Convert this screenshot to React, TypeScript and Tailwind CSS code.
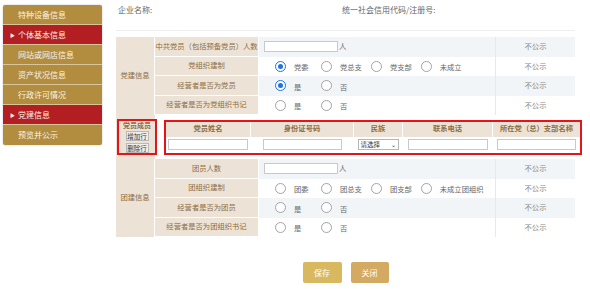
import clsx from "clsx";
import type { ReactNode } from "react";

const sideItems = [
  { label: "特种设备信息" },
  { label: "个体基本信息", active: true },
  { label: "网站或网店信息" },
  { label: "资产状况信息" },
  { label: "行政许可情况" },
  { label: "党建信息", active: true },
  { label: "预览并公示" },
];

function Radio({ label, checked }: { label: string; checked?: boolean }) {
  return (
    <span className="flex items-center">
      <span
        className={clsx(
          "flex h-[11px] w-[11px] items-center justify-center rounded-full bg-white",
          checked ? "border-[1.5px] border-[#1a73e8]" : "border border-[#a3a3a3]"
        )}
      >
        {checked && <span className="h-[5px] w-[5px] rounded-full bg-[#1a73e8]" />}
      </span>
      <span className="ml-[8px] mt-[3px] min-w-[27px] pr-[9px] text-[#666]">{label}</span>
    </span>
  );
}

function RadioGroup({ options, checked }: { options: string[]; checked?: number }) {
  return (
    <div className="flex items-center pl-[16px]">
      {options.map((o, i) => (
        <Radio key={o} label={o} checked={checked === i} />
      ))}
    </div>
  );
}

function CountInput() {
  return (
    <div className="flex items-center pl-[5px]">
      <input className="h-[11px] w-[74px] border border-[#c9c9c9] bg-white" />
      <span className="ml-px text-[#666]">人</span>
    </div>
  );
}

type Row = { label: string; value: ReactNode };

function InfoSection({ title, rows }: { title: string; rows: Row[] }) {
  return (
    <div className="grid grid-cols-[39px_104px_237px_79px] grid-rows-[repeat(4,19.5px)]">
      <div className="row-span-4 flex items-center justify-center border-r border-white bg-[#ece3d6] text-[#8d6d45]">
        {title}
      </div>
      {rows.map((r, i) => (
        <div key={r.label} className="contents">
          <div className="flex items-center justify-center border-r border-b border-white bg-[#ece3d6] text-[#8d6d45]">
            {r.label}
          </div>
          <div
            className={clsx(
              "flex items-center border-r border-[#e6e9eb]",
              i % 2 === 0 ? "bg-[#f1f5f7]" : "bg-white"
            )}
          >
            {r.value}
          </div>
          <div
            className={clsx(
              "flex items-center justify-center text-[#888]",
              i % 2 === 0 ? "bg-[#f1f5f7]" : "bg-white"
            )}
          >
            不公示
          </div>
        </div>
      ))}
    </div>
  );
}

const memberCols = [
  { title: "党员姓名", w: "w-[84px]", field: "w-[80px]" },
  { title: "身份证号码", w: "w-[103px]", field: "w-[79px]" },
  { title: "民族", w: "w-[49px]", field: "select" },
  { title: "联系电话", w: "w-[90px]", field: "w-[80px]" },
  { title: "所在党（总）支部名称", w: "w-[88px]", field: "w-[79px]" },
];

function MemberRow() {
  return (
    <div className="flex h-[44px] items-center">
      <div className="flex h-[44px] w-[39px] items-center bg-[#ece3d6]">
        <div className="ml-px flex h-[36px] w-[40px] shrink-0 flex-col items-center border-2 border-[#e3151a] bg-[#ece3d6]">
          <span className="text-[7px] leading-[9px] font-bold text-[#8d6d45]">党员成员</span>
          <button className="mt-px h-[10px] w-[23px] border border-[#b8b8b8] bg-[#eeeeee] text-[6.5px] leading-[8px] text-[#333]">
            增加行
          </button>
          <button className="mt-[2px] h-[10px] w-[23px] border border-[#b8b8b8] bg-[#eeeeee] text-[6.5px] leading-[8px] text-[#333]">
            删除行
          </button>
        </div>
      </div>
      <div className="ml-[9px] flex h-[35px] w-[418px] border-2 border-[#e3151a] bg-white">
        {memberCols.map((c, i) => (
          <div key={c.title} className={clsx("flex flex-col", c.w, i > 0 && "border-l border-white")}>
            <div className="flex h-[15px] items-center justify-center bg-[#ece3d6] font-bold text-[#8d6d45]">
              {c.title}
            </div>
            <div className="flex flex-1 items-center justify-center">
              {c.field === "select" ? (
                <div className="flex h-[11px] w-[41px] items-center justify-between border border-[#b5b5b5] px-[2px] text-[6.5px] text-[#333]">
                  <span>请选择</span>
                  <span className="text-[6px]">⌄</span>
                </div>
              ) : (
                <input className={clsx("h-[11px] border border-[#c9c9c9]", c.field)} />
              )}
            </div>
          </div>
        ))}
      </div>
    </div>
  );
}

export default function App() {
  return (
    <div
      className="flex h-[289px] w-[590px] bg-white text-[7.3px] leading-none"
      style={{ fontFamily: '"Noto Sans CJK SC", "Noto Sans", sans-serif' }}
    >
      <nav className="ml-[3px] mt-[5px] h-fit w-[99px] overflow-hidden rounded-[2px] bg-[#b28d40] shadow-[0_0_2px_rgba(0,0,0,0.25)]">
        {sideItems.map((s) => (
          <div
            key={s.label}
            className={clsx(
              "flex h-[20px] items-center border-b border-[#d8c59a] text-[8px] text-[#fbf3e0] last:border-b-0",
              s.active && "bg-[#b21e22]"
            )}
          >
            <span className="w-[15px] pl-[7px] text-[5px]">{s.active ? "▶" : ""}</span>
            {s.label}
          </div>
        ))}
      </nav>

      <main className="ml-[14px] flex w-[459px] flex-col">
        <div className="flex h-[31px] items-center border-b border-[#eeeeee] pb-[10px] text-[8px] text-[#666]">
          <span className="ml-[2px] w-[224px]">企业名称:</span>
          <span>统一社会信用代码/注册号:</span>
        </div>

        <div className="mt-[6px]">
          <InfoSection
            title="党建信息"
            rows={[
              { label: "中共党员（包括预备党员）人数", value: <CountInput /> },
              { label: "党组织建制", value: <RadioGroup options={["党委", "党总支", "党支部", "未成立"]} checked={0} /> },
              { label: "经营者是否为党员", value: <RadioGroup options={["是", "否"]} checked={0} /> },
              { label: "经营者是否为党组织书记", value: <RadioGroup options={["是", "否"]} /> },
            ]}
          />
          <MemberRow />
          <InfoSection
            title="团建信息"
            rows={[
              { label: "团员人数", value: <CountInput /> },
              { label: "团组织建制", value: <RadioGroup options={["团委", "团总支", "团支部", "未成立团组织"]} /> },
              { label: "经营者是否为团员", value: <RadioGroup options={["是", "否"]} /> },
              { label: "经营者是否为团组织书记", value: <RadioGroup options={["是", "否"]} /> },
            ]}
          />
        </div>

        <div className="mt-[25px] flex justify-center gap-[9px]">
          <button className="h-[21px] w-[39px] rounded-[2px] bg-[#d9b95f] text-[8px] text-white">保存</button>
          <button className="h-[21px] w-[38px] rounded-[2px] bg-[#d4aa62] text-[8px] text-white">关闭</button>
        </div>
      </main>
    </div>
  );
}
